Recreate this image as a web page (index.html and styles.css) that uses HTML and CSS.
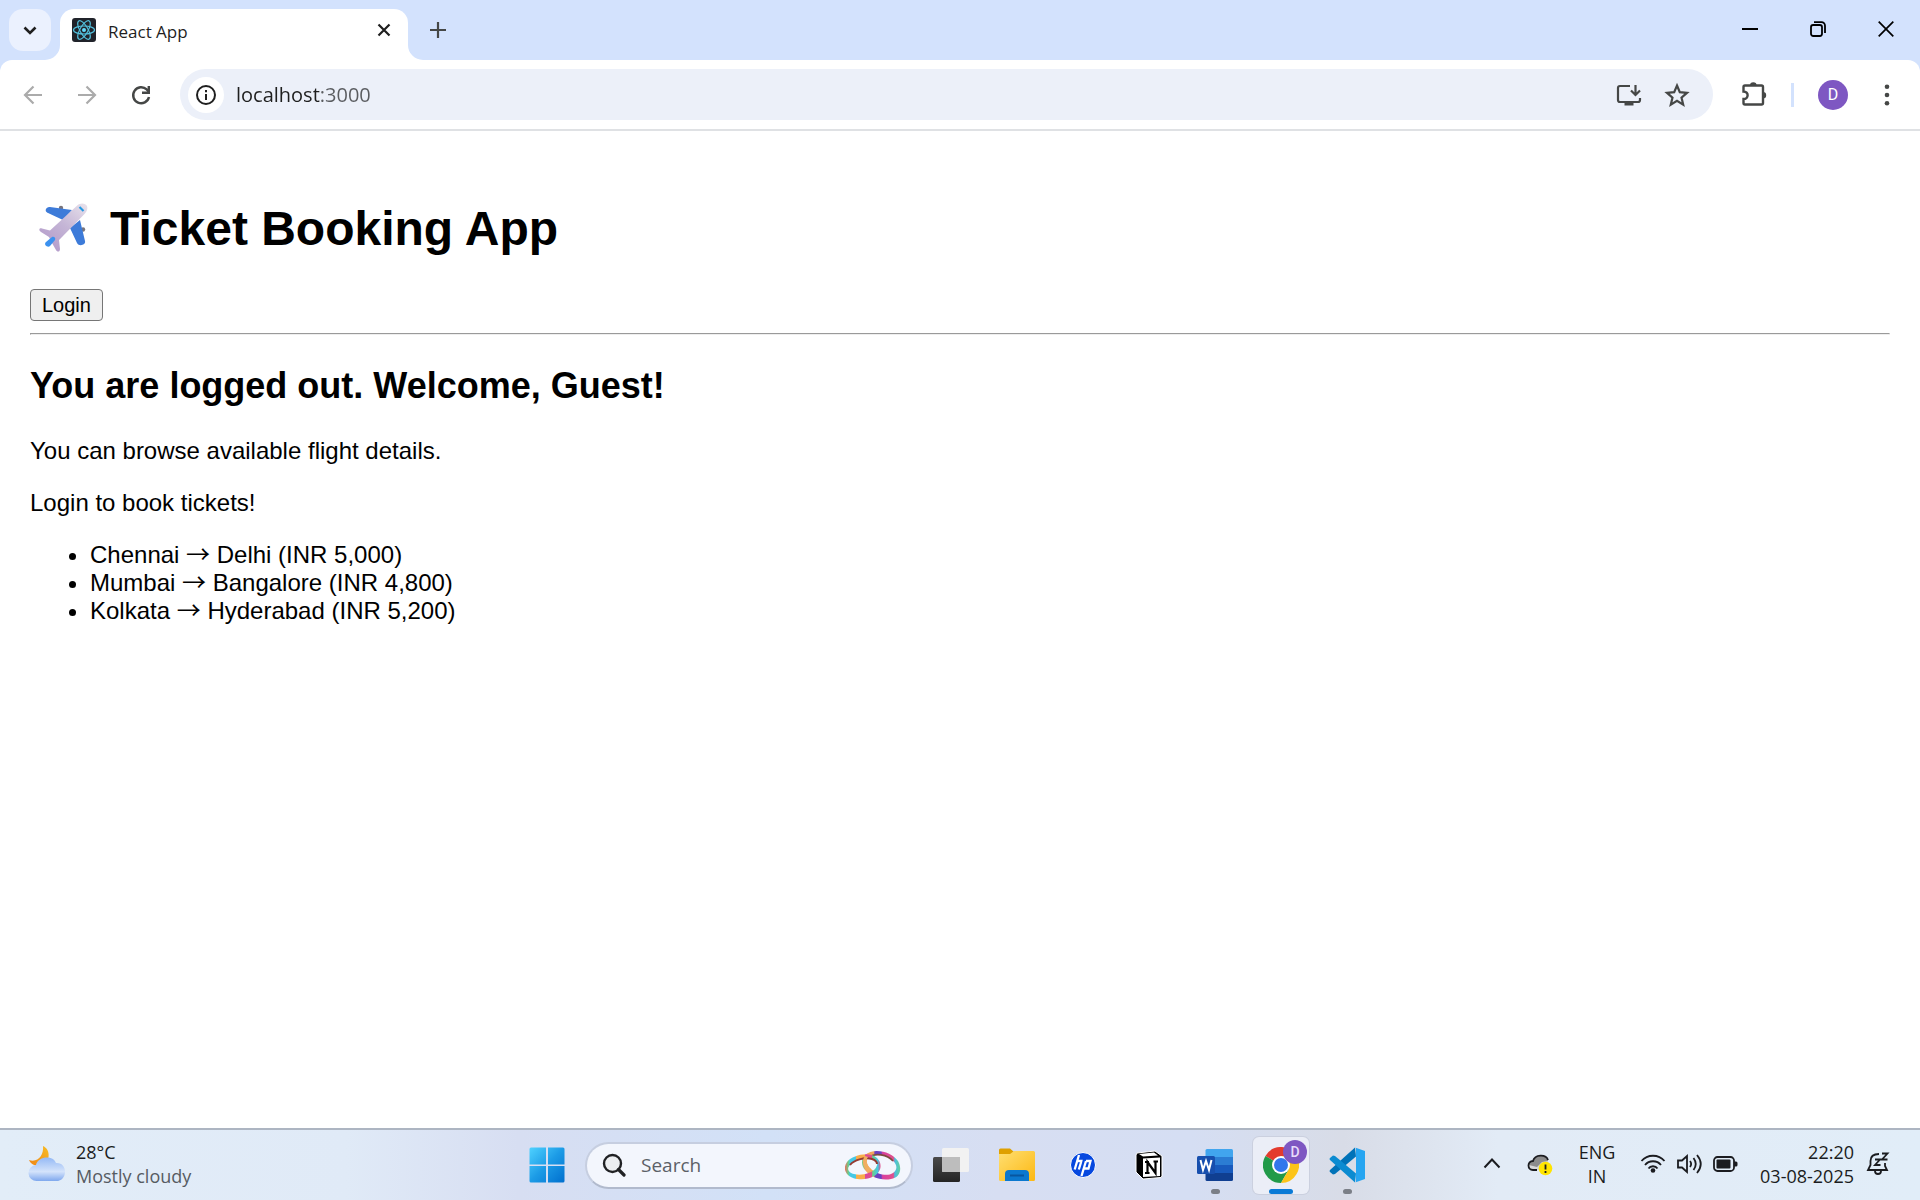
FILE: index.html
```html
<!DOCTYPE html>
<html lang="en">
<head>
<meta charset="utf-8">
<title>React App</title>
<link rel="stylesheet" href="styles.css">
</head>
<body>
<div class="desktop">
  <header class="browser">
    <div class="tabstrip">
      <button class="tab-search" aria-label="Search tabs"><svg width="18" height="18" viewBox="0 0 18 18"><path d="M3.500 6.500 9 12l5.500-5.500" fill="none" stroke="#1f1f1f" stroke-width="2.600"/></svg></button>
      <svg class="flare" width="15" height="15" viewBox="0 0 15 15"><path d="M15 0v15H0A15 15 0 0 0 15 0z" fill="#fff"/></svg>
      <div class="tab">
        <svg width="24" height="24" viewBox="0 0 24 24"><rect width="24" height="24" rx="3" fill="#20232a"/><g fill="none" stroke="#53c1de" stroke-width="1.200"><ellipse cx="12" cy="12" rx="10.500" ry="4"/><ellipse cx="12" cy="12" rx="10.500" ry="4" transform="rotate(60 12 12)"/><ellipse cx="12" cy="12" rx="10.500" ry="4" transform="rotate(120 12 12)"/></g><circle cx="12" cy="12" r="2" fill="#61dafb"/></svg>
        <span class="tab-title">React App</span>
        <button class="plain tab-close" aria-label="Close tab"><svg width="24" height="24" viewBox="0 0 24 24"><path d="m6.500 6.500 11 11m0-11-11 11" stroke="#1f1f1f" stroke-width="2.200"/></svg></button>
      </div>
      <svg class="flare" width="15" height="15" viewBox="0 0 15 15"><path d="M0 0v15h15A15 15 0 0 1 0 0z" fill="#fff"/></svg>
      <button class="plain new-tab" aria-label="New tab"><svg width="16" height="16" viewBox="0 0 16 16"><path d="M8 0v16M0 8h16" stroke="#454746" stroke-width="2.200"/></svg></button>
      <div class="window-controls">
        <button class="plain" aria-label="Minimize"><svg width="16" height="16" viewBox="0 0 16 16"><path d="M0 8h16" stroke="#000" stroke-width="2"/></svg></button>
        <button class="plain" aria-label="Restore"><svg width="16" height="16" viewBox="0 0 16 16"><g fill="none" stroke="#000" stroke-width="1.800"><rect x="1" y="4" width="11" height="11" rx="2.200"/><path d="M4 1.200h7.500a3.500 3.500 0 0 1 3.500 3.500V12"/></g></svg></button>
        <button class="plain" aria-label="Close"><svg width="16" height="16" viewBox="0 0 16 16"><path d="m.7.7 14.600 14.600m0-14.600L.7 15.300" stroke="#000" stroke-width="1.700"/></svg></button>
      </div>
    </div>
    <div class="toolbar">
      <nav class="nav-buttons" aria-label="History">
        <button class="plain" aria-label="Back"><svg width="24" height="24" viewBox="0 0 24 24"><path d="M21 12H4m8.500-8.500L4 12l8.500 8.500" fill="none" stroke="#ababab" stroke-width="2.200"/></svg></button>
        <button class="plain" aria-label="Forward"><svg width="24" height="24" viewBox="0 0 24 24"><path d="M3 12h17m-8.500-8.500L20 12l-8.500 8.500" fill="none" stroke="#ababab" stroke-width="2.200"/></svg></button>
        <button class="plain" aria-label="Reload"><svg width="24" height="24" viewBox="0 0 24 24"><path d="M20 14a8 8 0 1 1-2.300-7.600L20 9" fill="none" stroke="#454746" stroke-width="2.400"/><path d="M21 3v8h-8V8.600h5.600V3z" fill="#454746"/></svg></button>
      </nav>
      <div class="omnibox">
        <button class="site-info" aria-label="Site information"><svg width="24" height="24" viewBox="0 0 24 24"><circle cx="12" cy="12" r="9" fill="none" stroke="#1f1f1f" stroke-width="2"/><path d="M12 11v6M12 7v2.200" stroke="#1f1f1f" stroke-width="2"/></svg></button>
        <input class="address" type="text" value="localhost:3000" aria-label="Address">
        <button class="plain" aria-label="Install app"><svg width="26" height="26" viewBox="0 0 26 26"><g fill="none" stroke="#454746" stroke-width="2.200"><path d="M14 4H4a2 2 0 0 0-2 2v12a2 2 0 0 0 2 2h18a2 2 0 0 0 2-2v-2"/><path d="M19.500 3v10m-4.500-4.500 4.500 4.500 4.500-4.500"/></g><path d="M8.500 20h9v3.500h-9z" fill="#454746"/></svg></button>
        <button class="plain" aria-label="Bookmark"><svg width="26" height="26" viewBox="0 0 26 26"><path d="m13 3.500 2.800 6.700 7.200.6-5.500 4.800 1.700 7-6.200-3.700-6.200 3.700 1.700-7L3 10.800l7.200-.6z" fill="none" stroke="#454746" stroke-width="2.200"/></svg></button>
      </div>
      <button class="plain" aria-label="Extensions"><svg width="28" height="28" viewBox="0 0 28 28"><path d="M5 4.500h16.500A1.500 1.500 0 0 1 23 6v16a1.500 1.500 0 0 1-1.500 1.500H5A1.500 1.500 0 0 1 3.500 22v-4c5.500 0 5.500-7.500 0-7.500V6A1.500 1.500 0 0 1 5 4.500z" fill="none" stroke="#454746" stroke-width="2.400"/><path d="M10 4.500a3.300 3.300 0 0 1 6.600 0zM23 11a3.200 3.200 0 0 1 0 6.400z" fill="#454746"/></svg></button>
      <span class="divider"></span>
      <button class="avatar" aria-label="Profile">D</button>
      <button class="plain" aria-label="Menu"><svg width="24" height="24" viewBox="0 0 24 24"><g fill="#454746"><circle cx="12" cy="3.700" r="2.300"/><circle cx="12" cy="12" r="2.300"/><circle cx="12" cy="20.300" r="2.300"/></g></svg></button>
    </div>
  </header>

  <main class="app">
    <h1 class="app-title">
      <svg class="plane" width="68" height="64" viewBox="0 0 68 64">
        <defs><linearGradient id="hull" x1="1" y1="0" x2=".2" y2="1"><stop stop-color="#e9e3ec"/><stop offset=".5" stop-color="#c5b6d6"/><stop offset="1" stop-color="#b39aca"/></linearGradient></defs>
        <circle cx="31" cy="15" r="2.200" fill="#77747c"/><circle cx="53" cy="36.500" r="2.200" fill="#77747c"/>
        <path d="M20 14c-4-.5-6 4-2.500 5.700L33 27l9-10z" fill="#3d7bd9"/>
        <path d="M50 27 40 35l7 15c2 4 9 2 8-2z" fill="#3d7bd9"/>
        <path d="M46.700 13c4-4 9-2.500 10.300 0 1 3 0 5-2.500 8L32 44l-3 3 1 9c0 3-2.500 3.500-4 1l-4-7-3-6-8-5c-3-2-1.500-4.500 1-3.500l8 2z" fill="url(#hull)"/>
        <path d="m16 49 6-5c2-1 4 1 3 3l-5 6c-2 2-7-1-4-4z" fill="#3b91ef"/>
        <path d="m49.500 14 4 4" stroke="#2499e3" stroke-width="2.200"/>
      </svg>
      <span class="app-name">Ticket Booking App</span>
    </h1>
    <button class="login">Login</button>
    <hr class="rule">
    <h2 class="status">You are logged out. Welcome, Guest!</h2>
    <p>You can browse available flight details.</p>
    <p>Login to book tickets!</p>
    <ul class="flights">
      <li>Chennai <span class="arrow">→</span> Delhi (INR 5,000)</li>
      <li>Mumbai <span class="arrow">→</span> Bangalore (INR 4,800)</li>
      <li>Kolkata <span class="arrow">→</span> Hyderabad (INR 5,200)</li>
    </ul>
  </main>

  <footer class="taskbar">
    <button class="weather">
      <svg width="38" height="38" viewBox="0 0 38 38">
        <defs><linearGradient id="moon" x1="1" y1="0" x2="0" y2="1"><stop stop-color="#f7bd25"/><stop offset="1" stop-color="#ef8414"/></linearGradient><linearGradient id="cloud" x1="0" y1="0" x2="0" y2="1"><stop stop-color="#94b9f5"/><stop offset=".6" stop-color="#d4e3fb"/><stop offset="1" stop-color="#7fa8ee"/></linearGradient></defs>
        <path d="M15 1c8 3 8 18-3 20-6 0-10-3-11-6 9 3 15-5 14-14z" fill="url(#moon)"/>
        <path d="M9 36a8 8 0 0 1-1-16c2-9 17-10 20-2 12-1 12 18 0 18z" fill="url(#cloud)"/>
      </svg>
      <span class="weather-text"><span>28°C</span><span class="muted">Mostly cloudy</span></span>
    </button>

    <nav class="dock" aria-label="Pinned apps">
      <button class="dock-item" aria-label="Start"><svg width="36" height="36" viewBox="0 0 36 36"><defs><linearGradient id="win" x1="0" y1="0" x2="1" y2="1"><stop stop-color="#4fd2ff"/><stop offset=".5" stop-color="#1c9be6"/><stop offset="1" stop-color="#006fce"/></linearGradient></defs><path d="M2 .5h15v17H.5V2A1.500 1.500 0 0 1 2 .5zm17 0h15A1.500 1.500 0 0 1 35.500 2v15.500H19zM.5 19H17v16.500H2A1.500 1.500 0 0 1 .5 34zM19 19h16.500v15a1.500 1.500 0 0 1-1.500 1.500H19z" fill="url(#win)"/></svg></button>
      <label class="search">
        <svg width="24" height="24" viewBox="0 0 24 24"><circle cx="10.500" cy="10.500" r="8.500" fill="#eceef1" stroke="#202124" stroke-width="2.400"/><path d="m16.500 16.500 5.500 5.500" stroke="#202124" stroke-width="3.200" stroke-linecap="round"/></svg>
        <input type="text" placeholder="Search" aria-label="Search">
        <svg width="56" height="34" viewBox="0 0 56 34">
          <defs>
            <linearGradient id="ringA"><stop stop-color="#ef6a5a"/><stop offset=".1" stop-color="#68cf8c"/><stop offset=".14" stop-color="#46c8e4"/><stop offset=".3" stop-color="#46c8e4"/><stop offset=".32" stop-color="#f8ad4a"/><stop offset=".55" stop-color="#f8ad4a"/><stop offset=".57" stop-color="#dc4797"/><stop offset=".75" stop-color="#e0508c"/><stop offset=".78" stop-color="#68cf8c"/><stop offset=".92" stop-color="#46c8e4"/><stop offset="1" stop-color="#e0508c"/></linearGradient>
            <linearGradient id="ringB"><stop stop-color="#68cf8c"/><stop offset=".1" stop-color="#f2a65c"/><stop offset=".3" stop-color="#f2a65c"/><stop offset=".34" stop-color="#6b3fc0"/><stop offset=".5" stop-color="#6b3fc0"/><stop offset=".54" stop-color="#d8409f"/><stop offset=".82" stop-color="#e0508c"/><stop offset=".86" stop-color="#48bfe0"/><stop offset="1" stop-color="#68cf9c"/></linearGradient>
          </defs>
          <g fill-rule="evenodd">
            <path d="M20 7c9-8 27-3 33 6 5 9 1 17-7 18-10 2-21-2-26-9-4-5-4-11 0-15zm4 2c-4 3-2 9 2 12 6 5 16 8 22 4 5-3 4-9 0-12-6-7-18-8-24-4z" fill="url(#ringB)"/>
            <path d="M24 9c6-4 18-3 24 4" fill="none" stroke="#7c4a3c" stroke-width="1.600"/>
            <path d="M2 14C8 7 24 3 32 10c6 6 4 14-3 18-8 5-21 4-26-1-4-4-4-9-1-13zm3 3c-4 4-1 8 4 9 8 2 17-1 21-5 4-5 2-9-3-10-8-2-18 1-22 6z" fill="url(#ringA)"/>
            <path d="M5 17c4-5 14-8 22-6 3 1 5 3 5 5" fill="none" stroke="#963b32" stroke-width="2"/>
            <path d="M20 8c-4 5-2 11 3 16l3-3c-4-4-6-8-3-12z" fill="#f0ae60"/>
          </g>
        </svg>
      </label>
      <button class="dock-item" aria-label="Task view"><svg width="38" height="38" viewBox="0 0 38 38"><defs><linearGradient id="tvd" x1="0" y1="0" x2="0" y2="1"><stop stop-color="#4a4a4a"/><stop offset="1" stop-color="#242424"/></linearGradient></defs><rect x="1" y="11" width="27" height="25" rx="1.500" fill="url(#tvd)"/><rect x="10" y="2" width="27" height="24" rx="1.500" fill="#f2f2f2"/><path d="M10 11h18v15H11.500a1.500 1.500 0 0 1-1.500-1.500z" fill="#bdbdbd"/></svg></button>
      <button class="dock-item" aria-label="File Explorer"><svg width="36" height="36" viewBox="0 0 36 36"><defs><linearGradient id="fold" x1="0" y1="0" x2="1" y2="1"><stop stop-color="#ffdf72"/><stop offset="1" stop-color="#fcb813"/></linearGradient></defs><path d="M0 3a1.500 1.500 0 0 1 1.500-1.500H11L15 5v5H0z" fill="#dfa000"/><path d="M0 7h11l4-3h19.500A1.500 1.500 0 0 1 36 5.500v27a1.500 1.500 0 0 1-1.500 1.500h-33A1.500 1.500 0 0 1 0 32.500z" fill="url(#fold)"/><path d="M6 34V27a4 4 0 0 1 4-4h16a4 4 0 0 1 4 4v7z" fill="#0b78cf"/><path d="M11 28.500h14" stroke="#08569f" stroke-width="2"/></svg></button>
      <button class="dock-item" aria-label="HP"><svg width="26" height="26" viewBox="0 0 26 26"><circle cx="13" cy="13" r="12.500" fill="#0648df" stroke="#fff"/><g fill="none" stroke="#fff" stroke-width="2.300"><path d="M9 3 4.700 17.500M7.500 9h3.800l-.5 2-2 6.500"/><path d="M16 9h4.500l-2 7.500h-4.800M16 9l-4.500 15"/></g></svg></button>
      <button class="dock-item" aria-label="Notion"><svg width="28" height="30" viewBox="0 0 28 30"><path d="m2 3 18-2 7 5v20l-1 1.500L8 29l-7-7V5z" fill="#000" stroke="#fff"/><path d="m8 8.500 17-1V26L8 27zM4 4l15-1.500 4 3L8 6.500z" fill="#fff"/><path d="M12.500 23V12l8 11V11M10 12h4M10 23h4.500M18.500 11.500H23" fill="none" stroke="#000" stroke-width="2.200"/></svg></button>
      <button class="dock-item running" aria-label="Word"><svg width="36" height="36" viewBox="0 0 36 36"><path d="M10 2h24.500A1.500 1.500 0 0 1 36 3.500V10H8.500V3.500A1.500 1.500 0 0 1 10 2z" fill="#41a5ee"/><path d="M8.500 10H36v8H8.500z" fill="#2b7cd3"/><path d="M8.500 18H36v8H8.500z" fill="#185abd"/><path d="M8.500 26H36v6.500a1.500 1.500 0 0 1-1.500 1.500H10a1.500 1.500 0 0 1-1.500-1.500z" fill="#103f91"/><rect y="9" width="18" height="18" rx="1.500" fill="#174fae"/><path d="m3.500 13 2.500 10 3-9 3 9 2.500-10" fill="none" stroke="#fff" stroke-width="2"/></svg></button>
      <button class="dock-item active" aria-label="Chrome"><svg width="36" height="36" viewBox="0 0 36 36"><path d="M18 18 2.400 9A18 18 0 0 1 33.600 9z" fill="#e33b2e"/><path d="M18 18 2.400 9A18 18 0 0 0 18 36l7.800-13.500z" fill="#219a49"/><path d="M18 9h15.600A18 18 0 0 1 18 36l7.800-13.500z" fill="#fcc419"/><circle cx="18" cy="18" r="9" fill="#fff"/><circle cx="18" cy="18" r="7" fill="#3277ec"/></svg><span class="badge">D</span></button>
      <button class="dock-item running" aria-label="Visual Studio Code"><svg width="36" height="36" viewBox="0 0 36 36"><path d="M27 9.500 6 27l-2 .5-3-2.500c-1-1 0-2 0-2L26 .5z" fill="#0072b8"/><path d="M27 26.500 6 9l-2-.5L1 11c-1 1 0 2 0 2l25 22.500z" fill="#0b8bd1"/><path d="M26 .5 36 4v28l-10 3.500c1 0 1-1 1-2V2.500c0-1 0-2-1-2z" fill="#26a5f1"/></svg></button>
    </nav>

    <div class="tray">
      <button class="plain" aria-label="Show hidden icons"><svg width="18" height="18" viewBox="0 0 18 18"><path d="m1.500 12.500 7.500-8 7.500 8" fill="none" stroke="#1b1c20" stroke-width="2"/></svg></button>
      <button class="plain" aria-label="OneDrive"><svg width="26" height="24" viewBox="0 0 26 24"><path d="M6 18C0 18 0 9 6 9c2-7 13-7 15 0v9z" fill="#d8d8d8"/><path d="M2 13c0-3 2-4 4-4 2-7 13-7 15 0l-6 1-5 5z" fill="#8c8c8c"/><path d="M10 18H6C0 18 0 9 6 9c2-7 13-7 15-1" fill="none" stroke="#1b1c20" stroke-width="1.800"/><circle cx="18.500" cy="16.500" r="6.800" fill="#ffe400"/><path d="M18.500 12.500v5m0 1.500v2" stroke="#1b1c20" stroke-width="1.800"/></svg></button>
      <button class="plain lang"><span>ENG</span><span>IN</span></button>
      <button class="plain status-icons" aria-label="Network, volume and battery">
        <svg width="26" height="24" viewBox="0 0 26 24"><g fill="none" stroke="#1b1c20" stroke-width="1.800"><path d="M1.500 9c6-7 17-7 23 0M5 13c4-5 12-5 16 0M8.500 16.500c2-3 7-3 9 0"/></g><circle cx="13" cy="18.500" r="2.300" fill="#1b1c20"/></svg>
        <svg width="26" height="24" viewBox="0 0 26 24"><g fill="none" stroke="#1b1c20" stroke-width="1.800"><path d="M2 8.500h4L11 4v16l-5-4.500H2zM14 9c1.500 2 1.500 4 0 6M17.500 6c3 4 3 8 0 12M21 3c5 6 5 12 0 18"/></g></svg>
        <svg width="26" height="24" viewBox="0 0 26 24"><rect x="2" y="5" width="20" height="14" rx="3.500" fill="none" stroke="#1b1c20" stroke-width="1.800"/><rect x="4.500" y="7.500" width="14" height="9" rx="1" fill="#1b1c20"/><path d="M22 9.500h2a1.500 1.500 0 0 1 1.500 1.500v2a1.500 1.500 0 0 1-1.500 1.500h-2z" fill="#1b1c20"/></svg>
      </button>
      <button class="plain clock"><span>22:20</span><span>03-08-2025</span></button>
      <button class="plain" aria-label="Notifications"><svg width="24" height="26" viewBox="0 0 24 26"><g fill="none" stroke="#1b1c20" stroke-width="1.800"><path d="M13 3C7 3 4.500 6 4.500 10v4L2 19h19l-2-4v-3M9 20c0 4 6 4 6 0"/><path d="M9 8.500h5L9 14h5.500M16 2.500h5.500L16 8.500h5.500"/></g></svg></button>
    </div>
  </footer>
</div>
</body>
</html>
```
FILE: styles.css
```css
* { box-sizing: border-box; }

body {
  margin: 0;
  background: #fff;
  color: #000;
  font-family: Arial, "Liberation Sans", sans-serif;
  font-size: 24px;
}

svg { display: block; flex: none; }

button, input { font-family: "Open Sans", "Noto Sans", sans-serif; }

.plain {
  display: flex;
  align-items: center;
  justify-content: center;
  width: 36px;
  height: 36px;
  padding: 0;
  border: 0;
  background: none;
  color: #1b1c20;
}

.desktop {
  display: flex;
  flex-direction: column;
  min-height: 100vh;
}

/* Browser window */

.browser {
  background: #d3e2fd;
  font-family: "Open Sans", "Noto Sans", sans-serif;
}

.tabstrip {
  display: flex;
  align-items: flex-end;
  height: 60px;
  padding-left: 9px;
}

.tab-search {
  display: flex;
  align-items: center;
  justify-content: center;
  width: 42px;
  height: 42px;
  margin: 0 -6px 9px 0;
  padding: 0;
  border: 0;
  border-radius: 14px;
  background: #ebf1fe;
}

.tab {
  display: flex;
  align-items: center;
  gap: 12px;
  width: 348px;
  height: 51px;
  padding: 0 12px 9px;
  border-radius: 14px 14px 0 0;
  background: #fff;
}

.tab-title {
  flex: 1;
  padding-top: 3px;
  color: #1f1f1f;
  font-size: 17px;
  line-height: 24px;
}

.tab-close { width: 24px; height: 24px; }

.new-tab { width: 30px; margin: 0 0 12px; }

.window-controls {
  display: flex;
  align-self: flex-start;
  margin-left: auto;
}

.window-controls .plain { width: 68px; height: 58px; }

.toolbar {
  display: flex;
  align-items: center;
  height: 71px;
  padding: 0 15px;
  border-bottom: 2px solid #dfe1e4;
  border-radius: 12px 12px 0 0;
  background: #fff;
}

.nav-buttons {
  display: flex;
  gap: 18px;
  margin-right: 21px;
}

.omnibox {
  display: flex;
  flex: 1;
  align-items: center;
  gap: 12px;
  height: 51px;
  margin-right: 23px;
  padding: 0 18px 0 8px;
  border-radius: 26px;
  background: #ecf0f9;
}

.site-info {
  display: flex;
  align-items: center;
  justify-content: center;
  width: 36px;
  height: 36px;
  padding: 0;
  border: 0;
  border-radius: 50%;
  background: #fff;
}

/* The port is drawn lighter than the host name. */
.address {
  flex: 1;
  min-width: 0;
  padding: 0;
  border: 0;
  background: linear-gradient(90deg, #1f1f1f 84px, #5a5c60 84px);
  background-clip: text;
  color: transparent;
  font-size: 20px;
  line-height: 28px;
}

.divider {
  width: 3px;
  height: 24px;
  margin: 0 24px 0 19px;
  background: #d3e2fd;
}

.avatar {
  width: 30px;
  height: 30px;
  margin-right: 21px;
  padding: 0;
  border: 0;
  border-radius: 50%;
  background: #7e57c2;
  color: #fff;
  font-family: Roboto, sans-serif;
  font-size: 16px;
}

/* Page */

.app {
  flex: 1;
  padding: 30px;
}

.app-title {
  display: flex;
  align-items: center;
  gap: 12px;
  margin: 32px 0;
  font-size: 48px;
  line-height: 56px;
}

.app-name { padding-top: 8px; }

.login {
  display: block;
  height: 32px;
  padding: 1px 11px;
  border: 1px solid #767676;
  border-radius: 4px;
  background: #efefef;
  color: #000;
  font-family: Arial, "Liberation Sans", sans-serif;
  font-size: 20px;
}

.rule {
  margin: 12px 0 30px;
  border: 1px solid;
  border-color: #9a9a9a #eee #eee #9a9a9a;
}

.status {
  margin: 0 0 30px;
  font-size: 36px;
  line-height: 42px;
}

.app p {
  margin: 0 0 24px;
  line-height: 28px;
}

.flights {
  margin: 0;
  padding-left: 60px;
  line-height: 28px;
}

.arrow {
  font-family: "Noto Sans CJK JP", sans-serif;
  line-height: 20px;
}

/* Taskbar */

.taskbar {
  display: grid;
  grid-template-columns: 1fr auto 1fr;
  align-items: center;
  height: 72px;
  border-top: 2px solid #adb5c2;
  background: linear-gradient(90deg, #e2edf8 0, #e0eaf7 18%, #d7def2 27%, #d2e1f7 40%, #d7def2 52%, #d5def3 62%, #d8dce7 70%, #e2ebf6 78%, #e1edf8 100%);
  color: #1b1c20;
  font-family: "Open Sans", "Noto Sans", sans-serif;
}

.weather {
  display: flex;
  align-items: center;
  justify-self: start;
  gap: 10px;
  padding: 0 0 2px 28px;
  border: 0;
  background: none;
  color: #1b1c20;
  font-size: 18px;
  line-height: 24px;
  text-align: left;
}

.weather-text, .lang, .clock {
  display: flex;
  flex-direction: column;
}

.muted { color: #565b62; }

.dock {
  display: flex;
  align-items: center;
  gap: 10px;
  padding-right: 26px;
}

.dock-item {
  position: relative;
  display: flex;
  align-items: center;
  justify-content: center;
  width: 56px;
  height: 57px;
  padding: 0;
  border: 0;
  border-radius: 6px;
  background: none;
}

.dock-item.active {
  background: #ebeef7;
  box-shadow: 0 0 0 1px #cbd0df;
}

.running::after, .active::after {
  content: "";
  position: absolute;
  bottom: 0;
  left: 50%;
  width: 9px;
  height: 5px;
  margin-left: -4px;
  border-radius: 3px;
  background: #7b7f87;
}

.active::after {
  width: 24px;
  margin-left: -12px;
  background: #0a7ad6;
}

.badge {
  position: absolute;
  top: 3px;
  right: 2px;
  width: 24px;
  height: 24px;
  border-radius: 50%;
  background: #7e57c2;
  color: #e8dcfa;
  font: 500 14px/24px Roboto, sans-serif;
}

.search {
  display: flex;
  align-items: center;
  gap: 15px;
  width: 328px;
  height: 47px;
  padding: 0 10px 0 15px;
  border: 2px solid #c6cee0;
  border-bottom-color: #b1bacd;
  border-radius: 24px;
  background: #f3f6fd;
}

.search input {
  flex: 1;
  min-width: 0;
  padding: 0;
  border: 0;
  background: none;
  font-size: 19px;
  line-height: 28px;
}

.search input::placeholder { color: #5c6067; opacity: 1; }

.tray {
  display: flex;
  align-items: center;
  justify-self: end;
  padding-right: 24px;
}

.tray .plain {
  height: 50px;
  padding-bottom: 2px;
  font-size: 18px;
  line-height: 24px;
}

.tray .lang { width: 66px; margin: 0 10px 0 6px; }

.tray .plain:first-child { margin-right: 12px; }

.tray .status-icons { width: auto; gap: 10px; margin-right: 16px; }

.tray .clock { width: 100px; align-items: flex-end; margin-right: 6px; }
```
